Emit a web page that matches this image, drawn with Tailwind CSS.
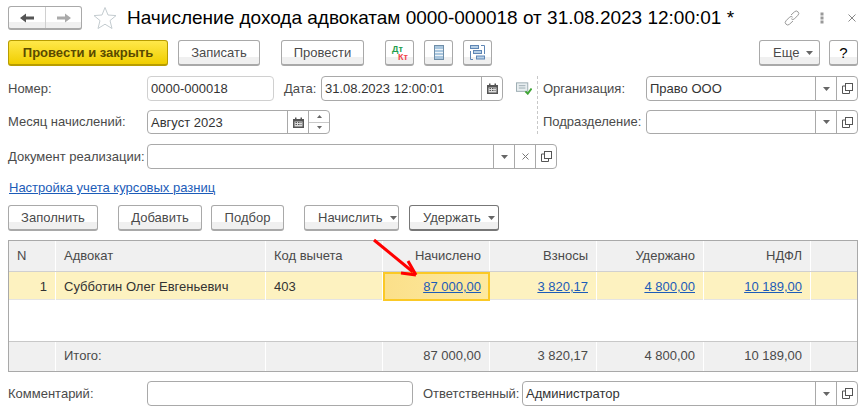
<!DOCTYPE html>
<html lang="ru">
<head>
<meta charset="UTF-8">
<title>Начисление дохода адвокатам</title>
<script src="https://cdn.jsdelivr.net/npm/@tailwindcss/browser@4"></script>
</head>
<body class="bg-white">
<div class="relative w-[866px] h-[408px] overflow-hidden bg-white font-['Liberation_Sans',Arial,sans-serif] text-[13px] leading-[16px] text-[#4a4a4a]">

  <!-- title bar -->
  <div class="flex items-center h-[24px] mt-[6px] ml-[8px]">
    <div class="flex w-[74px] h-[24px] border border-[#a9a9a9] rounded-[3px] border-b-2 bg-[linear-gradient(#fff_70%,#f0f0f0_70%)]">
      <div class="w-[37px] flex items-center justify-center border-r border-[#d0d0d0]">
        <svg width="16" height="12" viewBox="0 0 16 12"><path d="M1 6 L7 1.5 V4.5 H15 V7.5 H7 V10.5 Z" fill="#555"/></svg>
      </div>
      <div class="flex-1 flex items-center justify-center">
        <svg width="16" height="12" viewBox="0 0 16 12"><path d="M15 6 L9 1.5 V4.5 H1 V7.5 H9 V10.5 Z" fill="#aaa"/></svg>
      </div>
    </div>
    <svg class="ml-[11px]" width="24" height="24" viewBox="0 0 24 24"><path d="M12 1.5 L15 9 L23 9.6 L17 14.6 L19 22.5 L12 18.2 L5 22.5 L7 14.6 L1 9.6 L9 9 Z" fill="none" stroke="#c4ccd0" stroke-width="1"/></svg>
    <div class="ml-[10px] -mt-[1px] text-[19px] leading-[24px] text-black whitespace-nowrap">Начисление дохода адвокатам 0000-000018 от 31.08.2023 12:00:01 *</div>
    <div class="ml-auto mr-[10px] flex items-center">
      <svg width="16" height="16" viewBox="0 0 16 16" fill="none" stroke="#999" stroke-width="1"><path d="M7 5 L10.5 1.8 a2.3 2.3 0 0 1 3.5 3.4 L10.5 8.8 a2.3 2.3 0 0 1 -3.2 0"/><path d="M9 11 L5.5 14.2 a2.3 2.3 0 0 1 -3.5 -3.4 L5.5 7.2 a2.3 2.3 0 0 1 3.2 0"/></svg>
      <svg class="ml-[20px]" width="4" height="12" viewBox="0 0 4 12" fill="#999"><rect x="0.5" y="0.5" width="3" height="3"/><rect x="0.5" y="4.5" width="3" height="3"/><rect x="0.5" y="8.5" width="3" height="3"/></svg>
      <svg class="ml-[24px]" width="8" height="8" viewBox="0 0 8 8" stroke="#888" stroke-width="1"><path d="M0.5 0.5 L7.5 7.5 M7.5 0.5 L0.5 7.5"/></svg>
    </div>
  </div>

  <!-- command bar -->
  <div class="flex items-center h-[26px] mt-[10px] mx-[8px]">
    <button class="w-[160px] h-[26px] border border-[#b89d00] border-b-2 rounded-[3px] font-bold text-[#5a4a00] bg-[linear-gradient(#ffe84a,#f0ce00)]">Провести и закрыть</button>
    <button class="ml-[10px] w-[82px] h-[26px] border border-[#a9a9a9] border-b-2 rounded-[3px] bg-[linear-gradient(#fff_70%,#f0f0f0_70%)]">Записать</button>
    <button class="ml-[21px] w-[83px] h-[26px] border border-[#a9a9a9] border-b-2 rounded-[3px] bg-[linear-gradient(#fff_70%,#f0f0f0_70%)]">Провести</button>
    <button class="relative ml-[21px] w-[29px] h-[26px] border border-[#a9a9a9] border-b-2 rounded-[3px] bg-[linear-gradient(#fff_70%,#f0f0f0_70%)]">
      <span class="absolute left-[6px] top-[4px] text-[9px] leading-[8px] font-bold text-[#1f9d4d]">Дт</span>
      <span class="absolute left-[12px] top-[12px] text-[9px] leading-[8px] font-bold text-[#f0464c]">Кт</span>
    </button>
    <button class="ml-[10px] w-[29px] h-[26px] border border-[#a9a9a9] border-b-2 rounded-[3px] bg-[linear-gradient(#fff_70%,#f0f0f0_70%)] flex items-center justify-center">
      <svg width="10" height="15" viewBox="0 0 10 15"><rect x="0.5" y="0.5" width="9" height="14" fill="#a9c6de" stroke="#6f8ea8"/><path d="M1 4.5H9M1 7.5H9M1 10.5H9" stroke="#eef4f8"/></svg>
    </button>
    <button class="ml-[10px] w-[29px] h-[26px] border border-[#a9a9a9] border-b-2 rounded-[3px] bg-[linear-gradient(#fff_70%,#f0f0f0_70%)] flex items-center justify-center">
      <svg width="15" height="15" viewBox="0 0 15 15" fill="#b6cfe6" stroke="#5f86b5"><rect x="0.5" y="0.5" width="8" height="3"/><rect x="3.5" y="5.5" width="8" height="3"/><rect x="6.5" y="11" width="8" height="3"/><path d="M0.5 6V14.5H3M11 0.5H14.5V9" fill="none"/></svg>
    </button>
    <button class="ml-auto w-[61px] h-[26px] border border-[#a9a9a9] border-b-2 rounded-[3px] bg-[linear-gradient(#fff_70%,#f0f0f0_70%)] flex items-center pl-[13px] gap-[7px]">Еще
      <svg width="7" height="4" viewBox="0 0 7 4"><path d="M0 0H7L3.5 4Z" fill="#666"/></svg>
    </button>
    <button class="ml-[9px] w-[29px] h-[26px] border border-[#a9a9a9] border-b-2 rounded-[3px] bg-[linear-gradient(#fff_70%,#f0f0f0_70%)] text-[15px] text-black">?</button>
  </div>

  <!-- header fields -->
  <div class="flex mt-[10px] mx-[8px]">
    <div class="w-[529px]">
      <div class="flex items-center h-[25px]">
        <div class="w-[139px]">Номер:</div>
        <div class="w-[127px] h-[25px] border border-[#d0d0d0] rounded-[4px] px-[3px] leading-[23px] text-[#333]">0000-000018</div>
        <div class="ml-[10px] w-[37px]">Дата:</div>
        <div class="flex w-[182px] h-[25px] border border-[#a9a9a9] rounded-[4px]">
          <div class="flex-1 px-[3px] leading-[23px] text-[#333]">31.08.2023 12:00:01</div>
          <div class="w-[21px] border-l border-[#a9a9a9] flex items-center justify-center">
            <svg width="11" height="11" viewBox="0 0 11 11"><path d="M0 2H2V0.5H3.5V2H7.5V0.5H9V2H11V11H0Z" fill="#555"/><path d="M1.5 4.5H9.5V9.5H1.5Z" fill="#ddd"/><path d="M2.5 5.5H4M5 5.5H6.5M7.5 5.5H8.5M2.5 7.5H4M5 7.5H6.5M7.5 7.5H8.5" stroke="#555"/></svg>
          </div>
        </div>
        <svg class="ml-[13px]" width="16" height="13" viewBox="0 0 17 13"><rect x="0.5" y="0.5" width="12" height="9" fill="#e8eef0" stroke="#9aaab0"/><path d="M3 3.5H10M3 6H10" stroke="#9aaab0"/><path d="M10 9.5L12.5 12L16.5 6.5" fill="none" stroke="#3fa535" stroke-width="2"/></svg>
      </div>
      <div class="flex items-center h-[24px] mt-[9px]">
        <div class="w-[139px]">Месяц начислений:</div>
        <div class="flex w-[183px] h-[24px] border border-[#a9a9a9] rounded-[4px]">
          <div class="flex-1 px-[3px] leading-[23px] text-[#333]">Август 2023</div>
          <div class="w-[21px] border-l border-[#a9a9a9] flex items-center justify-center">
            <svg width="11" height="11" viewBox="0 0 11 11"><path d="M0 2H2V0.5H3.5V2H7.5V0.5H9V2H11V11H0Z" fill="#555"/><path d="M1.5 4.5H9.5V9.5H1.5Z" fill="#ddd"/><path d="M2.5 5.5H4M5 5.5H6.5M7.5 5.5H8.5M2.5 7.5H4M5 7.5H6.5M7.5 7.5H8.5" stroke="#555"/></svg>
          </div>
          <div class="w-[21px] border-l border-[#a9a9a9] flex flex-col">
            <div class="flex-1 flex items-center justify-center border-b border-[#c8c8c8]"><svg width="5" height="3" viewBox="0 0 5 3"><path d="M0 3H5L2.5 0Z" fill="#666"/></svg></div>
            <div class="flex-1 flex items-center justify-center"><svg width="5" height="3" viewBox="0 0 5 3"><path d="M0 0H5L2.5 3Z" fill="#666"/></svg></div>
          </div>
        </div>
      </div>
    </div>
    <div class="w-0 h-[58px] border-l border-dashed border-[#c8c8c8]"></div>
    <div class="flex-1 ml-[5px]">
      <div class="flex items-center h-[25px]">
        <div class="w-[103px]">Организация:</div>
        <div class="flex flex-1 h-[25px] border border-[#a9a9a9] rounded-[4px]">
          <div class="flex-1 px-[3px] leading-[23px] text-[#333]">Право ООО</div>
          <div class="w-[21px] border-l border-[#a9a9a9] flex items-center justify-center"><svg width="7" height="4" viewBox="0 0 7 4"><path d="M0 0H7L3.5 4Z" fill="#666"/></svg></div>
          <div class="w-[21px] border-l border-[#a9a9a9] flex items-center justify-center"><svg width="11" height="11" viewBox="0 0 11 11" fill="none" stroke="#555"><rect x="3.5" y="0.5" width="7" height="7"/><path d="M3.5 3H0.5V10.5H7.5V7.5"/></svg></div>
        </div>
      </div>
      <div class="flex items-center h-[24px] mt-[9px]">
        <div class="w-[103px]">Подразделение:</div>
        <div class="flex flex-1 h-[24px] border border-[#a9a9a9] rounded-[4px]">
          <div class="flex-1"></div>
          <div class="w-[21px] border-l border-[#a9a9a9] flex items-center justify-center"><svg width="7" height="4" viewBox="0 0 7 4"><path d="M0 0H7L3.5 4Z" fill="#666"/></svg></div>
          <div class="w-[21px] border-l border-[#a9a9a9] flex items-center justify-center"><svg width="11" height="11" viewBox="0 0 11 11" fill="none" stroke="#555"><rect x="3.5" y="0.5" width="7" height="7"/><path d="M3.5 3H0.5V10.5H7.5V7.5"/></svg></div>
        </div>
      </div>
    </div>
  </div>

  <div class="flex items-center h-[25px] mt-[10px] mx-[8px]">
    <div class="w-[139px] whitespace-nowrap">Документ реализации:</div>
    <div class="flex w-[410px] h-[25px] border border-[#a9a9a9] rounded-[4px]">
      <div class="flex-1"></div>
      <div class="w-[21px] border-l border-[#a9a9a9] flex items-center justify-center"><svg width="7" height="4" viewBox="0 0 7 4"><path d="M0 0H7L3.5 4Z" fill="#666"/></svg></div>
      <div class="w-[21px] border-l border-[#a9a9a9] flex items-center justify-center"><svg width="7" height="7" viewBox="0 0 7 7" stroke="#777"><path d="M0.5 0.5L6.5 6.5M6.5 0.5L0.5 6.5"/></svg></div>
      <div class="w-[21px] border-l border-[#a9a9a9] flex items-center justify-center"><svg width="11" height="11" viewBox="0 0 11 11" fill="none" stroke="#555"><rect x="3.5" y="0.5" width="7" height="7"/><path d="M3.5 3H0.5V10.5H7.5V7.5"/></svg></div>
    </div>
  </div>

  <a class="block mt-[11px] ml-[9px] underline text-[#1c5cb8]">Настройка учета курсовых разниц</a>

  <!-- table toolbar -->
  <div class="flex items-center h-[26px] mt-[9px] ml-[8px]">
    <button class="w-[90px] h-[26px] border border-[#a9a9a9] border-b-2 rounded-[3px] bg-[linear-gradient(#fff_70%,#f0f0f0_70%)]">Заполнить</button>
    <button class="ml-[20px] w-[84px] h-[26px] border border-[#a9a9a9] border-b-2 rounded-[3px] bg-[linear-gradient(#fff_70%,#f0f0f0_70%)]">Добавить</button>
    <button class="ml-[9px] w-[73px] h-[26px] border border-[#a9a9a9] border-b-2 rounded-[3px] bg-[linear-gradient(#fff_70%,#f0f0f0_70%)]">Подбор</button>
    <button class="ml-[20px] w-[95px] h-[26px] border border-[#a9a9a9] border-b-2 rounded-[3px] bg-[linear-gradient(#fff_70%,#f0f0f0_70%)] flex items-center pl-[13px] gap-[8px]">Начислить
      <svg width="7" height="4" viewBox="0 0 7 4"><path d="M0 0H7L3.5 4Z" fill="#666"/></svg>
    </button>
    <button class="ml-[10px] w-[90px] h-[26px] border border-[#777] border-b-2 rounded-[3px] bg-[linear-gradient(#fff_70%,#f0f0f0_70%)] flex items-center pl-[13px] gap-[7px]">Удержать
      <svg width="7" height="4" viewBox="0 0 7 4"><path d="M0 0H7L3.5 4Z" fill="#666"/></svg>
    </button>
  </div>

  <!-- table -->
  <div class="mt-[9px] mx-[8px] w-[850px] h-[132px] border border-[#a9a9a9] flex flex-col">
    <div class="grid grid-cols-[47px_210px_117px_107px_107px_107px_107px_1fr] h-[31px] bg-[#f0f0f0] border-b border-[#d0d0d0] leading-[29px]">
      <div class="px-[8px] border-r border-white">N</div>
      <div class="px-[8px] border-r border-white">Адвокат</div>
      <div class="px-[8px] border-r border-white">Код вычета</div>
      <div class="px-[8px] text-right border-r border-white">Начислено</div>
      <div class="px-[8px] text-right border-r border-white">Взносы</div>
      <div class="px-[8px] text-right border-r border-white">Удержано</div>
      <div class="px-[8px] text-right border-r border-white">НДФЛ</div>
      <div></div>
    </div>
    <div class="grid grid-cols-[47px_210px_117px_107px_107px_107px_107px_1fr] h-[28px] bg-[#fdf2c0] border-b border-[#e4e4e4] leading-[29px] text-[#333]">
      <div class="px-[8px] text-right border-r border-white">1</div>
      <div class="px-[8px] border-r border-white whitespace-nowrap">Субботин Олег Евгеньевич</div>
      <div class="px-[8px] border-r border-white">403</div>
      <div class="px-[7px] text-right border-2 border-[#fbc926] bg-[linear-gradient(90deg,#fbe08a,#fde9a0)] leading-[25px] text-[#1c5cb8] underline">87 000,00</div>
      <div class="px-[8px] text-right border-r border-white text-[#1c5cb8] underline">3 820,17</div>
      <div class="px-[8px] text-right border-r border-white text-[#1c5cb8] underline">4 800,00</div>
      <div class="px-[8px] text-right border-r border-white text-[#1c5cb8] underline">10 189,00</div>
      <div></div>
    </div>
    <div class="flex-1"></div>
    <div class="grid grid-cols-[47px_210px_117px_107px_107px_107px_107px_1fr] h-[30px] bg-[#f0f0f0] border-t border-[#c8c8c8] leading-[27px]">
      <div class="px-[8px] border-r border-white"></div>
      <div class="px-[8px] border-r border-white">Итого:</div>
      <div class="px-[8px] border-r border-white"></div>
      <div class="px-[8px] text-right border-r border-white">87 000,00</div>
      <div class="px-[8px] text-right border-r border-white">3 820,17</div>
      <div class="px-[8px] text-right border-r border-white">4 800,00</div>
      <div class="px-[8px] text-right border-r border-white">10 189,00</div>
      <div></div>
    </div>
  </div>

  <!-- footer -->
  <div class="flex items-center h-[25px] mt-[9px] mx-[8px]">
    <div class="w-[139px]">Комментарий:</div>
    <div class="w-[266px] h-[25px] border border-[#a9a9a9] rounded-[4px]"></div>
    <div class="ml-[10px] w-[99px] whitespace-nowrap">Ответственный:</div>
    <div class="flex flex-1 h-[25px] border border-[#a9a9a9] rounded-[4px]">
      <div class="flex-1 px-[3px] leading-[23px] text-[#333]">Администратор</div>
      <div class="w-[21px] border-l border-[#a9a9a9] flex items-center justify-center"><svg width="7" height="4" viewBox="0 0 7 4"><path d="M0 0H7L3.5 4Z" fill="#666"/></svg></div>
      <div class="w-[21px] border-l border-[#a9a9a9] flex items-center justify-center"><svg width="11" height="11" viewBox="0 0 11 11" fill="none" stroke="#555"><rect x="3.5" y="0.5" width="7" height="7"/><path d="M3.5 3H0.5V10.5H7.5V7.5"/></svg></div>
    </div>
  </div>

  <!-- red annotation arrow -->
  <svg class="absolute left-[370px] top-[236px]" width="50" height="44" viewBox="0 0 50 44">
    <path d="M4 4L43 36" stroke="#ff0000" stroke-width="3" fill="none"/>
    <path d="M46 39L31 37M46 39L38 25" stroke="#ff0000" stroke-width="3" fill="none"/>
  </svg>
</div>
</body>
</html>
